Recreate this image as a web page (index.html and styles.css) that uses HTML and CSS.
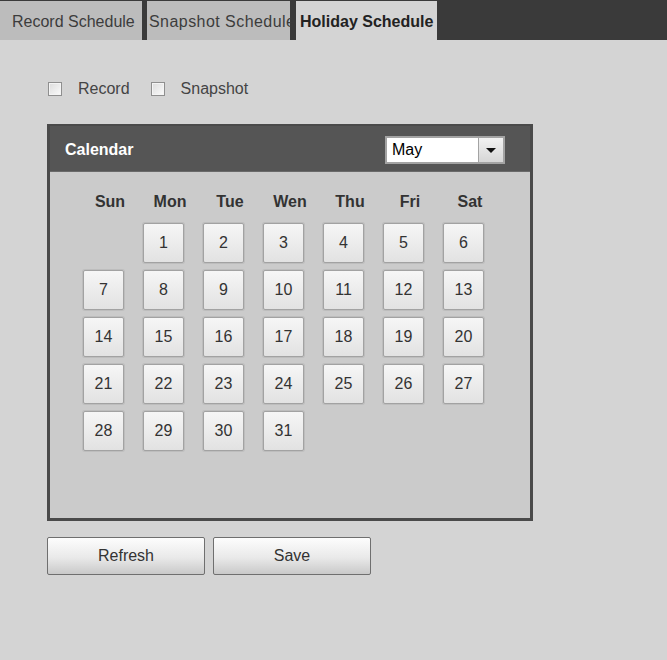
FILE: index.html
```html
<!DOCTYPE html>
<html lang="en">
<head>
    <meta charset="UTF-8">
    <title>Holiday Schedule</title>
    <link rel="stylesheet" href="styles.css">
</head>
<body>

    <!-- Tabs -->
    <div class="tabbar">
        <div class="tab tab-record">Record Schedule</div>
        <div class="tab tab-snapshot">Snapshot Schedule</div>
        <div class="tab tab-holiday active">Holiday Schedule</div>
    </div>

    <div class="content">
        <!-- Record / Snapshot options -->
        <div class="options">
            <label class="check"><span class="box"></span>Record</label>
            <label class="check"><span class="box"></span>Snapshot</label>
        </div>

        <!-- Calendar -->
        <div class="calendar">
            <div class="calendar-head">
                <span class="calendar-title">Calendar</span>
                <div class="month-select">
                    <span class="month-value">May</span>
                    <span class="month-arrow"></span>
                </div>
            </div>
            <div class="calendar-body">
                <div class="weekdays">
                    <span>Sun</span><span>Mon</span><span>Tue</span><span>Wen</span><span>Thu</span><span>Fri</span><span>Sat</span>
                </div>
                <div class="days">
                    <span></span>
                    <button class="day">1</button>
                    <button class="day">2</button>
                    <button class="day">3</button>
                    <button class="day">4</button>
                    <button class="day">5</button>
                    <button class="day">6</button>
                    <button class="day">7</button>
                    <button class="day">8</button>
                    <button class="day">9</button>
                    <button class="day">10</button>
                    <button class="day">11</button>
                    <button class="day">12</button>
                    <button class="day">13</button>
                    <button class="day">14</button>
                    <button class="day">15</button>
                    <button class="day">16</button>
                    <button class="day">17</button>
                    <button class="day">18</button>
                    <button class="day">19</button>
                    <button class="day">20</button>
                    <button class="day">21</button>
                    <button class="day">22</button>
                    <button class="day">23</button>
                    <button class="day">24</button>
                    <button class="day">25</button>
                    <button class="day">26</button>
                    <button class="day">27</button>
                    <button class="day">28</button>
                    <button class="day">29</button>
                    <button class="day">30</button>
                    <button class="day">31</button>
                </div>
            </div>
        </div>

        <!-- Actions -->
        <div class="actions">
            <button class="btn">Refresh</button>
            <button class="btn">Save</button>
        </div>
    </div>

</body>
</html>
```

FILE: styles.css
```css
/* General Reset */
* {
    margin: 0;
    padding: 0;
    box-sizing: border-box;
}

body {
    font-family: 'Liberation Sans', Arial, sans-serif;
    font-size: 16px;
    color: #333;
    background-color: #d4d4d4;
    width: 667px;
    height: 660px;
    overflow: hidden;
}

/* Tabs */
.tabbar {
    display: flex;
    height: 40px;
    padding-top: 1px;
    background-color: #3a3a3a;
}

.tab {
    height: 39px;
    line-height: 41px;
    background-color: #bcbcbc;
    color: #3c3c3c;
    white-space: nowrap;
}

.tab-record {
    width: 142px;
    padding-left: 12px;
    margin-right: 5px;
}

.tab-snapshot {
    width: 143px;
    padding-left: 2px;
    margin-right: 6px;
    letter-spacing: 0.45px;
}

.tab-holiday {
    width: 141px;
    padding-left: 4px;
}

.tab.active {
    background-color: #d4d4d4;
    color: #222;
    font-weight: bold;
}

/* Content */
.content {
    padding: 39px 0 0 47px;
}

.options {
    display: flex;
    align-items: center;
    height: 20px;
}

.check {
    display: flex;
    align-items: center;
    margin-right: 20px;
    color: #444;
}

.box {
    width: 14px;
    height: 14px;
    margin-left: 1px;
    margin-right: 16px;
    border: 1px solid #8f8f8f;
    background: linear-gradient(135deg, #dcdcdc, #fbfbfb);
    box-shadow: inset 0 0 0 1px #f4f4f4;
}

/* Calendar */
.calendar {
    width: 486px;
    height: 397px;
    margin-top: 25px;
    border: 3px solid #4a4a4a;
    border-top-width: 2px;
    background-color: #cbcbcb;
}

.calendar-head {
    display: flex;
    justify-content: space-between;
    align-items: center;
    height: 46px;
    padding: 2px 25px 0 15px;
    background-color: #555;
    border-bottom: 1px solid #6a6a6a;
}

.calendar-title {
    color: #fff;
    font-weight: bold;
}

.month-select {
    display: flex;
    width: 120px;
    height: 28px;
    border: 2px solid #a3a3a3;
    background-color: #fff;
}

.month-value {
    flex: 1;
    padding-left: 5px;
    line-height: 24px;
    color: #000;
    border-right: 1px solid #a3a3a3;
}

.month-arrow {
    width: 24px;
    position: relative;
    background: linear-gradient(#f2f2f2, #d6d6d6);
}

.month-arrow::after {
    content: '';
    position: absolute;
    left: 7px;
    top: 10px;
    border-left: 5px solid transparent;
    border-right: 5px solid transparent;
    border-top: 5px solid #111;
}

.calendar-body {
    padding: 18px 0 0 30px;
}

.weekdays,
.days {
    display: grid;
    grid-template-columns: repeat(7, 60px);
}

.weekdays span {
    text-align: center;
    line-height: 24px;
    font-weight: bold;
    color: #333;
}

.days {
    margin-top: 9px;
    row-gap: 7px;
}

.day {
    width: 41px;
    height: 40px;
    margin-left: 3px;
    font-family: inherit;
    font-size: 16px;
    color: #333;
    border: 1px solid #a2a2a2;
    border-radius: 2px;
    background: linear-gradient(#f6f6f6, #e2e2e2);
    box-shadow: 0 0 0 1px #bdbdbd;
    cursor: pointer;
}

/* Actions */
.actions {
    display: flex;
    gap: 8px;
    margin-top: 16px;
}

.btn {
    width: 158px;
    height: 38px;
    font-family: inherit;
    font-size: 16px;
    color: #333;
    border: 1px solid #6f6f6f;
    border-radius: 2px;
    background: linear-gradient(#fdfdfd, #e9e9e9 55%, #c9c9c9);
    cursor: pointer;
}
```
